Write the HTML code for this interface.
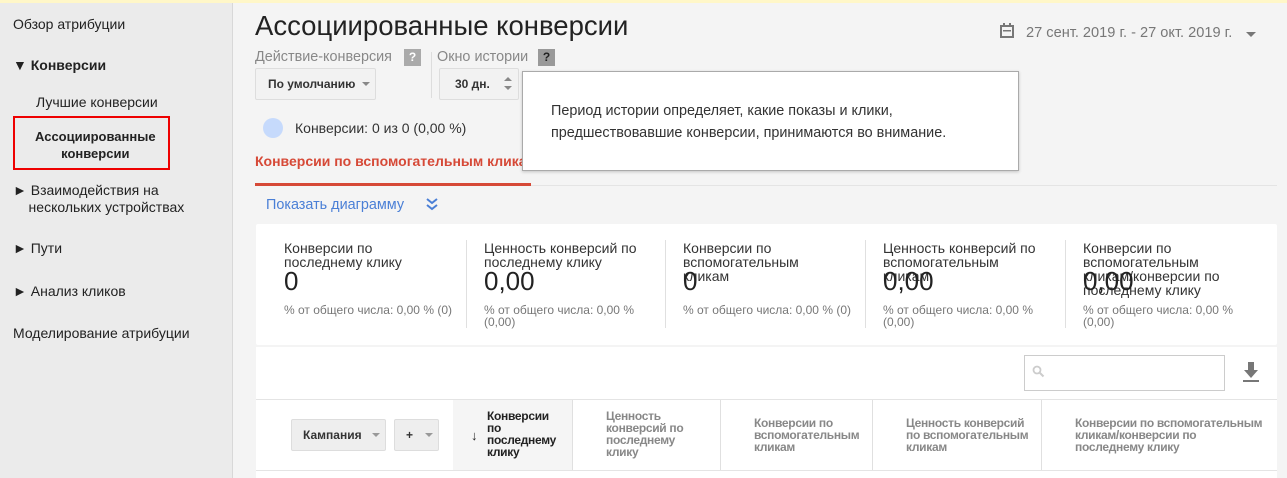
<!DOCTYPE html><html><head><meta charset="utf-8"><style>
body{margin:0;width:1287px;height:478px;overflow:hidden;background:#f4f4f4;font-family:"Liberation Sans",sans-serif;position:relative}
.a{position:absolute;white-space:nowrap}
.side{position:absolute;left:0;top:3px;width:232px;height:475px;background:#ebebeb;border-right:1px solid #d8d8d8}
.side .a{font-size:14px;color:#222}
.lbl{font-size:14px;color:#333;line-height:14px}
.big{font-size:26px;color:#222}
.sub{font-size:12px;color:#777;line-height:12px}
.vd{position:absolute;width:1px;background:#e0e0e0}
.th{font-size:12px;font-weight:bold;color:#888;line-height:12px;letter-spacing:-0.3px}
.btn{position:absolute;background:#eee;border:1px solid #ddd;border-radius:2px;font-size:12px;font-weight:bold;color:#333}
</style></head><body>
<div class="a" style="left:0;top:0;width:1287px;height:3px;background:#fff7c8"></div>
<div class="side">
<div class="a" style="left:13px;top:13px">Обзор атрибуции</div>
<div class="a" style="left:13px;top:54px;font-weight:bold">▼ Конверсии</div>
<div class="a" style="left:36px;top:91px">Лучшие конверсии</div>
<div class="a" style="left:13px;top:113px;width:153px;height:50px;border:2px solid #e00;white-space:normal"></div>
<div class="a" style="left:35px;top:125px;font-weight:bold;font-size:13px;text-align:center;line-height:17px">Ассоциированные<br>конверсии</div>
<div class="a" style="left:13px;top:179px;line-height:17px">► Взаимодействия на<br>&nbsp;&nbsp;&nbsp;&nbsp;нескольких устройствах</div>
<div class="a" style="left:13px;top:237px">► Пути</div>
<div class="a" style="left:13px;top:280px">► Анализ кликов</div>
<div class="a" style="left:13px;top:322px">Моделирование атрибуции</div>
</div>
<div class="a" style="left:255px;top:10px;font-size:27.5px;color:#222">Ассоциированные конверсии</div>
<div class="a" style="left:1000px;top:23px;width:14px;height:14px"><svg width="14" height="16" viewBox="0 0 14 16"><rect x="1" y="3" width="12" height="11" fill="none" stroke="#777" stroke-width="2"/><rect x="3" y="0" width="2" height="4" fill="#777"/><rect x="9" y="0" width="2" height="4" fill="#777"/><rect x="3" y="7" width="8" height="1.5" fill="#777"/></svg></div>
<div class="a" style="left:1026px;top:25px;font-size:14.6px;color:#777">27 сент. 2019 г. - 27 окт. 2019 г.</div>
<div class="a" style="left:1246px;top:32px;border:5px solid transparent;border-top-color:#777"></div>
<div class="a" style="left:255px;top:49px;font-size:14.4px;color:#888">Действие-конверсия</div>
<div class="a" style="left:404px;top:49px;width:17px;height:17px;background:#aaa;color:#fff;font-size:12px;font-weight:bold;text-align:center;line-height:17px">?</div>
<div class="a" style="left:437px;top:49px;font-size:14.4px;color:#888">Окно истории</div>
<div class="a" style="left:538px;top:49px;width:17px;height:17px;background:#999;color:#222;font-size:12px;font-weight:bold;text-align:center;line-height:17px">?</div>
<div class="a" style="left:431px;top:52px;width:1px;height:46px;background:#ddd"></div>
<div class="btn" style="left:255px;top:68px;width:119px;height:30px;line-height:30px;background:#f2f2f2"><span style="margin-left:12px">По умолчанию</span><span style="position:absolute;right:5px;top:13px;border:4px solid transparent;border-top-color:#888"></span></div>
<div class="btn" style="left:439px;top:68px;width:78px;height:30px;line-height:30px;background:#f2f2f2"><span style="margin-left:15px">30 дн.</span><span style="position:absolute;right:6px;top:8px;border:4px solid transparent;border-bottom-color:#888;border-top:0"></span><span style="position:absolute;right:6px;top:17px;border:4px solid transparent;border-top-color:#888;border-bottom:0"></span></div>
<div class="a" style="left:263px;top:118px;width:20px;height:20px;border-radius:50%;background:#c6dafc"></div>
<div class="a" style="left:295px;top:120px;font-size:14px;color:#333">Конверсии: 0 из 0 (0,00 %)</div>
<div class="a" style="left:255px;top:153px;font-size:14px;font-weight:bold;color:#d64937">Конверсии по вспомогательным кликам</div>
<div class="a" style="left:255px;top:183px;width:276px;height:3px;background:#d64937"></div>
<div class="a" style="left:531px;top:185px;width:746px;height:1px;background:#e4e4e4"></div>
<div class="a" style="left:522px;top:71px;width:495px;height:98px;background:#fff;border:1px solid #aaa;box-shadow:0 1px 3px rgba(0,0,0,.2)"></div>
<div class="a" style="left:551px;top:100px;font-size:14.4px;color:#333;line-height:22px">Период истории определяет, какие показы и клики,<br>предшествовавшие конверсии, принимаются во внимание.</div>
<div class="a" style="left:266px;top:197px;font-size:14.4px;color:#4a7fd6">Показать диаграмму</div>
<div class="a" style="left:425px;top:197px"><svg width="14" height="14"><path d="M2 2l5 4 5-4M2 8l5 4 5-4" fill="none" stroke="#4a7fd6" stroke-width="2"/></svg></div>
<div class="a" style="left:256px;top:224px;width:1021px;height:121px;background:#fff;border-radius:2px"></div>
<div class="vd" style="left:466px;top:240px;height:88px"></div><div class="vd" style="left:665px;top:240px;height:88px"></div><div class="vd" style="left:865px;top:240px;height:88px"></div><div class="vd" style="left:1065px;top:240px;height:88px"></div>
<div class="a lbl" style="left:284px;top:241px">Конверсии по<br>последнему клику</div>
<div class="a lbl" style="left:484px;top:241px">Ценность конверсий по<br>последнему клику</div>
<div class="a lbl" style="left:683px;top:241px">Конверсии по<br>вспомогательным<br>кликам</div>
<div class="a lbl" style="left:883px;top:241px">Ценность конверсий по<br>вспомогательным<br>кликам</div>
<div class="a lbl" style="left:1083px;top:241px">Конверсии по<br>вспомогательным<br>кликам/конверсии по<br>последнему клику</div>
<div class="a big" style="left:284px;top:266px">0</div><div class="a big" style="left:484px;top:266px">0,00</div><div class="a big" style="left:683px;top:266px">0</div><div class="a big" style="left:883px;top:266px">0,00</div><div class="a big" style="left:1083px;top:266px">0,00</div>
<div class="a sub" style="left:284px;top:304px">% от общего числа: 0,00 % (0)</div>
<div class="a sub" style="left:484px;top:304px">% от общего числа: 0,00 %<br>(0,00)</div>
<div class="a sub" style="left:683px;top:304px">% от общего числа: 0,00 % (0)</div>
<div class="a sub" style="left:883px;top:304px">% от общего числа: 0,00 %<br>(0,00)</div>
<div class="a sub" style="left:1083px;top:304px">% от общего числа: 0,00 %<br>(0,00)</div>
<div class="a" style="left:256px;top:347px;width:1021px;height:131px;background:#fff"></div>
<div class="a" style="left:1024px;top:355px;width:199px;height:34px;border:1px solid #ccc;background:#fff"></div>
<div class="a" style="left:1032px;top:365px"><svg width="14" height="14"><circle cx="5" cy="5" r="3.5" fill="none" stroke="#ccc" stroke-width="1.8"/><path d="M7.5 7.5l4 4" stroke="#ccc" stroke-width="2"/></svg></div>
<div class="a" style="left:1241px;top:362px"><svg width="20" height="22"><path d="M7 0h6v8h4l-7 8-7-8h4z" fill="#777"/><rect x="2" y="18" width="16" height="2" fill="#777"/></svg></div>
<div class="a" style="left:256px;top:399px;width:1021px;height:1px;background:#e4e4e4"></div>
<div class="a" style="left:256px;top:470px;width:1021px;height:1px;background:#e4e4e4"></div>
<div class="a" style="left:453px;top:400px;width:119px;height:70px;background:#f5f5f5"></div>
<div class="vd" style="left:572px;top:400px;height:70px"></div><div class="vd" style="left:720px;top:400px;height:70px"></div><div class="vd" style="left:872px;top:400px;height:70px"></div><div class="vd" style="left:1041px;top:400px;height:70px"></div>
<div class="btn" style="left:291px;top:419px;width:93px;height:30px;line-height:30px"><span style="margin-left:11px">Кампания</span><span style="position:absolute;right:5px;top:13px;border:4px solid transparent;border-top-color:#999"></span></div>
<div class="btn" style="left:394px;top:419px;width:43px;height:30px;line-height:30px"><span style="margin-left:11px">+</span><span style="position:absolute;right:5px;top:13px;border:4px solid transparent;border-top-color:#999"></span></div>
<div class="a" style="left:471px;top:428px;font-size:13px;color:#222">↓</div>
<div class="a th" style="left:487px;top:410px;color:#222">Конверсии<br>по<br>последнему<br>клику</div>
<div class="a th" style="left:606px;top:410px">Ценность<br>конверсий по<br>последнему<br>клику</div>
<div class="a th" style="left:754px;top:417px">Конверсии по<br>вспомогательным<br>кликам</div>
<div class="a th" style="left:906px;top:417px">Ценность конверсий<br>по вспомогательным<br>кликам</div>
<div class="a th" style="left:1075px;top:417px">Конверсии по вспомогательным<br>кликам/конверсии по<br>последнему клику</div>
</body></html>
